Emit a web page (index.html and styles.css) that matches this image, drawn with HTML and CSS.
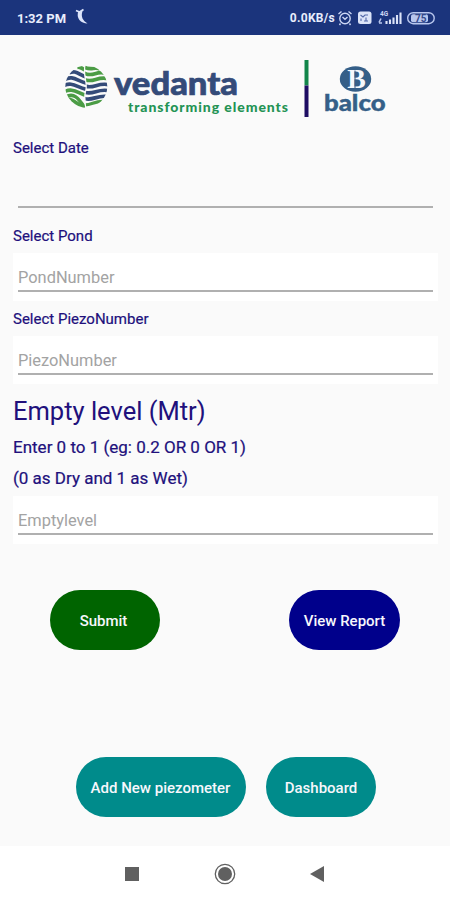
FILE: index.html
```html
<!DOCTYPE html>
<html lang="en">
<head>
    <meta charset="UTF-8">
    <meta name="viewport" content="width=device-width, initial-scale=1.0">
    <title>Piezometer Entry</title>
    <link rel="stylesheet" href="styles.css">
</head>
<body>
    <!-- Status bar -->
    <header class="status-bar">
        <span class="clock">1:32 PM</span>
        <svg class="moon-icon" width="14" height="17" viewBox="0 0 14 17">
            <path d="M1 2.5 L4.5 4 L8.5 1.5" fill="none" stroke="#dce4fa" stroke-width="1.8"/>
            <path d="M3.5 3 C0.5 10 6 15.5 12.5 15.5 C8 12.5 5.5 9 7.5 3 Z" fill="#dce4fa"/>
        </svg>
        <span class="net-speed">0.0KB/s</span>
        <svg class="status-icons" width="100" height="20" viewBox="0 0 100 20">
            <!-- alarm -->
            <g fill="none" stroke="#ccd7f5" stroke-width="1.4">
                <circle cx="9" cy="10.5" r="5.2"/>
                <path d="M2.5 6 L5.5 3.5 M12.5 3.5 L15.5 6 M4.5 15.5 L3.5 17 M13.5 15.5 L14.5 17 M6.5 9 L9 11.2 L11.5 9"/>
            </g>
            <!-- volte -->
            <rect x="22" y="3.5" width="13.5" height="12.5" rx="2.5" fill="#dbe3f8"/>
            <path d="M24.5 7 L27 9 L29 7 H32 M25 13 V10.5 M28 13 H32 M30 9.5 V13" fill="none" stroke="#5368a8" stroke-width="1.1"/>
            <!-- signal -->
            <text x="44" y="8" class="tiny-text">4G</text>
            <path d="M43 14.5 L45 10.5 M43 15 H46" fill="none" stroke="#b9c7ee" stroke-width="1.6"/>
            <path d="M50.5 16 V13 M54 16 V11.5 M57.5 16 V9.5 M61 16 V7 M64.5 16 V4.5" stroke="#dbe3f8" stroke-width="2.1"/>
            <!-- battery -->
            <rect x="71.7" y="4.7" width="26.5" height="11" rx="5.5" fill="none" stroke="#b9c7ee" stroke-width="1.4"/>
            <rect x="75" y="6.2" width="17" height="8" rx="2" fill="#b9c7ee"/>
            <text x="79" y="13.8" class="battery-text">75</text>
        </svg>
    </header>

    <main class="screen">
        <div class="brand">
            <svg width="450" height="95" viewBox="0 35 450 95">
                <defs>
                    <clipPath id="left-half">
                        <path d="M84.6 65 C82 76 87.5 83 85 91 C83 98 85 103 85 109 H60 V65 Z"/>
                    </clipPath>
                    <clipPath id="right-half">
                        <path d="M85.6 65 C83.6 76 88.6 83 86.2 91 C84.6 98 86.2 103 86.2 109 H112 V65 Z"/>
                    </clipPath>
                    <clipPath id="globe">
                        <circle cx="86.3" cy="86.5" r="21"/>
                    </clipPath>
                </defs>
                <g clip-path="url(#globe)" fill="none" stroke-width="3.7">
                    <g clip-path="url(#left-half)">
                        <path d="M77 67.5 C80 66 83 69 88 72" stroke="#4b9c45"/>
                        <path d="M69 73 C76 69 80 76 88 77.5" stroke="#344b79"/>
                        <path d="M64 80 C73 74 78 82 88 83.5" stroke="#344b79"/>
                        <path d="M62 86.5 C73 80 78 89 88 89.5" stroke="#344b79"/>
                        <path d="M62 93 C73 86 78 94 88 96" stroke="#4b9c45"/>
                        <path d="M64 98 C74 91 79 99 85 108" stroke="#4b9c45" stroke-width="3.5"/>
                        <path d="M66 100 C73 99 77 105 85 109" stroke="#4b9c45" stroke-width="5"/>
                    </g>
                    <g clip-path="url(#right-half)">
                        <path d="M84 67 C91 71 94 66.5 100 69" stroke="#4b9c45"/>
                        <path d="M84 73 C93 78 96 70 106 73.5" stroke="#4b9c45"/>
                        <path d="M84 79.3 C93 84 98 75 109 79" stroke="#4b9c45"/>
                        <path d="M84 85.7 C93 90 98 81.5 110 85" stroke="#344b79"/>
                        <path d="M84 92 C93 96 98 87.5 110 91" stroke="#344b79"/>
                        <path d="M84 98.3 C92 102 98 93.5 110 97" stroke="#344b79"/>
                        <path d="M84 105 C92 105 97 99.5 107 102" stroke="#4b9c45" stroke-width="3.2"/>
                    </g>
                </g>
                <text x="114" y="95" class="vedanta" textLength="124" lengthAdjust="spacingAndGlyphs">vedanta</text>
                <text x="128" y="112" class="tagline" textLength="160" lengthAdjust="spacing">transforming elements</text>

                <rect x="304.5" y="60" width="4" height="25.5" fill="#12854a"/>
                <rect x="304.5" y="85.5" width="4" height="31.5" fill="#1e0d63"/>

                <!-- balco emblem -->
                <ellipse cx="355.5" cy="79" rx="15.7" ry="12.7" fill="#355f88"/>
                <text x="347.3" y="88" class="emblem" textLength="18.5" lengthAdjust="spacingAndGlyphs">B</text>
                <path d="M355 70.5 V89" stroke="#355f88" stroke-width="1"/>
                <text x="324" y="110.5" class="balco" textLength="61.5" lengthAdjust="spacingAndGlyphs">balco</text>
            </svg>
        </div>

        <form class="form">
            <label class="label" for="date">Select Date</label>
            <div class="field field-date"><input type="text" id="date"></div>

            <label class="label" for="pond">Select Pond</label>
            <div class="field"><input type="text" id="pond" placeholder="PondNumber"></div>

            <label class="label" for="piezo">Select PiezoNumber</label>
            <div class="field"><input type="text" id="piezo" placeholder="PiezoNumber"></div>

            <h1 class="title">Empty level (Mtr)</h1>
            <p class="hint">Enter 0 to 1 (eg: 0.2 OR 0 OR 1)</p>
            <p class="hint">(0 as Dry and 1 as Wet)</p>
            <div class="field field-level"><input type="text" id="level" placeholder="Emptylevel"></div>

            <div class="actions">
                <button type="button" class="btn btn-submit">Submit</button>
                <button type="button" class="btn btn-report">View Report</button>
            </div>
            <div class="actions actions-bottom">
                <button type="button" class="btn btn-add">Add New piezometer</button>
                <button type="button" class="btn btn-dashboard">Dashboard</button>
            </div>
        </form>
    </main>

    <!-- Navigation bar -->
    <nav class="nav-bar">
        <svg width="14" height="14" viewBox="0 0 14 14"><rect width="14" height="14" fill="#606060"/></svg>
        <svg width="22" height="22" viewBox="0 0 22 22">
            <circle cx="11" cy="11" r="9.7" fill="none" stroke="#606060" stroke-width="1.3"/>
            <circle cx="11" cy="11" r="7" fill="#606060"/>
        </svg>
        <svg width="14" height="16" viewBox="0 0 14 16"><path d="M0 8 L14 0 V16 Z" fill="#606060"/></svg>
    </nav>
</body>
</html>
```
FILE: styles.css
```css
* {
    margin: 0;
    padding: 0;
    box-sizing: border-box;
}

body {
    width: 450px;
    height: 900px;
    display: flex;
    flex-direction: column;
    overflow: hidden;
    font-family: Roboto, sans-serif;
    background: #fafafa;
    color: #21107c;
}

/* Status bar */
.status-bar {
    height: 35px;
    flex-shrink: 0;
    display: flex;
    align-items: center;
    padding: 1px 14px 0 17px;
    background: #1b347c;
    color: #e8edfc;
    font-weight: 700;
}

.clock {
    width: 50px;
    font-size: 13px;
    white-space: nowrap;
}

.moon-icon {
    margin: -3px 0 0 8px;
}

.net-speed {
    margin-left: auto;
    font-size: 12px;
    letter-spacing: 0.3px;
}

.status-icons {
    margin-left: 1px;
}

.tiny-text {
    font-size: 6.5px;
    fill: #ccd7f5;
}

.battery-text {
    font-size: 10px;
    fill: #33498a;
}

/* Logos */
.screen {
    height: 811px;
    flex-shrink: 0;
}

.brand {
    height: 95px;
}

.brand svg {
    display: block;
}

.vedanta {
    font-family: Lato, sans-serif;
    font-size: 33px;
    font-weight: 900;
    fill: #344b79;
    stroke: #344b79;
    stroke-width: 0.7px;
}

.tagline {
    font-family: Lato, sans-serif;
    font-size: 14px;
    font-weight: 900;
    fill: #239354;
}

.emblem {
    font-family: "Liberation Serif", serif;
    font-size: 27px;
    font-weight: 700;
    fill: #f5f8fb;
}

.balco {
    font-family: Lato, sans-serif;
    font-size: 22px;
    font-weight: 900;
    fill: #355f88;
    stroke: #355f88;
    stroke-width: 0.4px;
}

/* Form */
.form {
    padding: 0 12px 0 13px;
}

.label {
    display: block;
    height: 35px;
    padding-top: 1px;
    font-size: 15px;
    line-height: 35px;
    -webkit-text-stroke: 0.2px #21107c;
}

.field {
    height: 48px;
    padding: 0 5px;
    background: #ffffff;
}

.field input {
    display: block;
    width: 415px;
    height: 39px;
    padding-top: 12px;
    border: none;
    border-bottom: 2px solid #b0b0b0;
    background: transparent;
    font-family: inherit;
    font-size: 16.4px;
    color: #21107c;
    outline: none;
}

.field input::placeholder {
    color: #a3a3a3;
    opacity: 1;
}

.field-date {
    height: 53px;
    padding-top: 4px;
    background: transparent;
}

.title {
    height: 48px;
    padding-top: 4px;
    font-size: 25.5px;
    font-weight: 400;
    line-height: 47px;
}

.hint {
    height: 31px;
    font-size: 17px;
    line-height: 31px;
    -webkit-text-stroke: 0.2px #21107c;
}

.field-level {
    margin-top: 2px;
}

/* Buttons */
.actions {
    display: flex;
    justify-content: space-between;
    padding: 0 38px 0 37px;
    margin-top: 46px;
}

.actions-bottom {
    justify-content: flex-start;
    gap: 20px;
    padding-left: 63px;
    margin-top: 107px;
}

.btn {
    width: 110px;
    height: 60px;
    padding-top: 1px;
    border: none;
    border-radius: 30px;
    color: #f7f7fc;
    font-family: inherit;
    font-size: 15px;
    font-weight: 500;
    white-space: nowrap;
}

.btn-submit {
    padding-right: 3px;
    background: #006400;
}

.btn-report {
    width: 111px;
    background: #00008b;
}

.btn-add,
.btn-dashboard {
    background: #008b8b;
}

.btn-add {
    width: 170px;
    padding-right: 1px;
}

/* Navigation bar */
.nav-bar {
    flex: 1;
    display: flex;
    align-items: center;
    justify-content: space-between;
    padding: 2px 126px 0 125px;
    background: #ffffff;
}
```
